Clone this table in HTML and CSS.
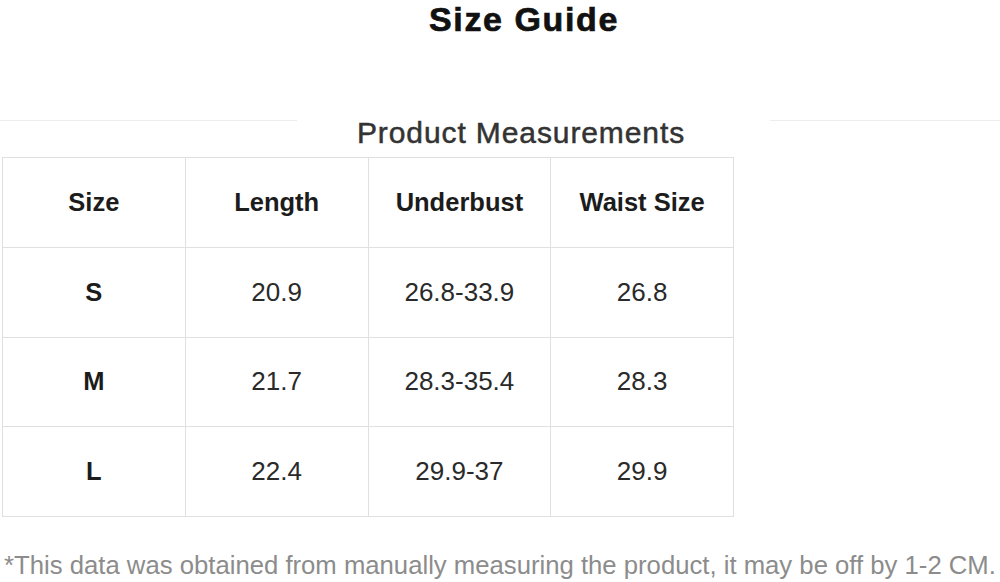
FILE: index.html
```html
<!DOCTYPE html>
<html lang="en">
<head>
<meta charset="utf-8">
<title>Size Guide</title>
<link rel="stylesheet" href="styles.css">
</head>
<body>
  <h1 class="title">Size Guide</h1>
  <div class="subhead">
    <span class="rule rule-left"></span>
    <h2 class="subhead-text">Product Measurements</h2>
    <span class="rule rule-right"></span>
  </div>
  <div class="table">
    <div class="cell head">Size</div>
    <div class="cell head">Length</div>
    <div class="cell head">Underbust</div>
    <div class="cell head">Waist Size</div>

    <div class="cell head">S</div>
    <div class="cell">20.9</div>
    <div class="cell">26.8-33.9</div>
    <div class="cell">26.8</div>

    <div class="cell head">M</div>
    <div class="cell">21.7</div>
    <div class="cell">28.3-35.4</div>
    <div class="cell">28.3</div>

    <div class="cell head">L</div>
    <div class="cell">22.4</div>
    <div class="cell">29.9-37</div>
    <div class="cell">29.9</div>
  </div>
  <p class="note">*This data was obtained from manually measuring the product, it may be off by 1-2 CM.</p>
</body>
</html>
```
FILE: styles.css
```css
html, body {
  margin: 0;
  padding: 0;
  background: #ffffff;
}

body {
  width: 1000px;
  height: 582px;
  overflow: hidden;
  font-family: Arial, "Liberation Sans", Arimo, Helvetica, sans-serif;
}

.title {
  margin: 0;
  padding-left: 48px;
  height: 38px;
  line-height: 38px;
  font-size: 34px;
  font-weight: bold;
  letter-spacing: 1.6px;
  color: #111111;
  -webkit-text-stroke: 0.7px #111111;
  text-align: center;
}

.subhead {
  display: flex;
  align-items: flex-start;
  margin-top: 80px;
  height: 39px;
}

.rule {
  display: block;
  margin-top: 2px;
  height: 0;
  border-top: 1px solid #ededed;
}

.rule-left {
  width: 297px;
}

.rule-right {
  width: 230px;
}

.subhead-text {
  flex: 1;
  margin: 0;
  padding-right: 25px;
  font-size: 30px;
  line-height: 29px;
  font-weight: normal;
  letter-spacing: 0.9px;
  color: #333333;
  -webkit-text-stroke: 0.5px #333333;
  text-align: center;
}

.table {
  display: grid;
  grid-template-columns: repeat(4, 181.75px);
  grid-template-rows: repeat(4, 88.75px);
  gap: 1px;
  padding: 1px;
  width: max-content;
  margin-left: 2px;
  background: #e0e0e0;
}

.cell {
  display: flex;
  align-items: center;
  justify-content: center;
  background: #ffffff;
  font-size: 26px;
  color: #2a2a2a;
}

.cell.head {
  font-size: 25.5px;
  font-weight: bold;
  color: #1c1c1c;
}

.note {
  margin: 33px 0 0;
  line-height: 30px;
  font-size: 25.7px;
  color: #8c8c8c;
  text-align: center;
  white-space: nowrap;
}
```
